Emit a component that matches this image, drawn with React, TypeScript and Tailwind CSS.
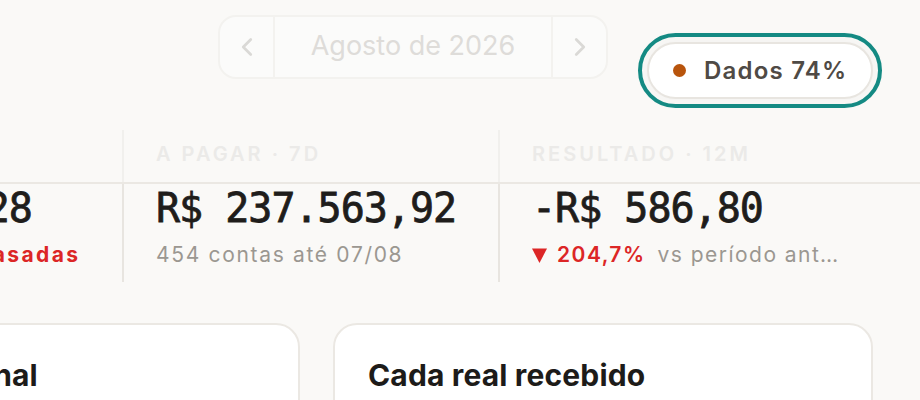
import { ChevronLeft, ChevronRight } from "lucide-react"

const columns = [
  {
    label: "Vencidas",
    value: "R$ 8.412,28",
    sub: <span className="font-bold text-[#dc2626] tracking-[0.115em]">11.023 contas atrasadas</span>,
  },
  {
    label: "A pagar · 7d",
    value: "R$ 237.563,92",
    sub: <span className="text-[#9b9791] tracking-[0.08em]">454 contas até 07/08</span>,
  },
  {
    label: "Resultado · 12m",
    value: "-R$ 586,80",
    sub: (
      <span className="flex items-center gap-[12px] overflow-hidden whitespace-nowrap">
        <span className="flex shrink-0 items-center gap-[10px] font-semibold text-[#dc2626] tracking-[0.07em]">
          <svg width="15" height="15" viewBox="0 0 15 15" aria-hidden>
            <path d="M0 0.5h15L7.5 15z" fill="#dc2626" />
          </svg>
          204,7%
        </span>
        <span className="truncate text-[#9b9791] tracking-[0.07em]">vs período anterior</span>
      </span>
    ),
  },
]

export default function App() {
  return (
    <div className="h-[400px] w-[920px] overflow-hidden bg-[#faf9f7] font-['Inter',sans-serif]">
      {/* Top bar: month picker + data badge */}
      <div className="flex items-start pl-[218px] pt-[15px]">
        <div className="flex h-[64px] w-[390px] items-stretch rounded-[18px] border-2 border-[#f3f2ef] bg-[#fbfbfa]">
          <button className="flex w-[55px] items-center justify-center border-r-2 border-[#f3f2ef] text-[#dad9d6]">
            <ChevronLeft size={30} strokeWidth={2.2} />
          </button>
          <div className="flex flex-1 items-center justify-center pb-[2px] text-[27px] text-[#dedcd9]">
            Agosto de 2026
          </div>
          <button className="flex w-[55px] items-center justify-center border-l-2 border-[#f3f2ef] text-[#dad9d6]">
            <ChevronRight size={30} strokeWidth={2.2} />
          </button>
        </div>

        <div className="ml-[39px] mt-[27px] flex h-[57px] w-[226px] items-center gap-[18px] rounded-full border-2 border-[#e8e5e0] bg-white pl-[24px] outline-4 outline-offset-[5px] outline-[#148a83] shadow-[0_0_18px_rgba(0,0,0,0.04)]">
          <span className="h-[13px] w-[13px] shrink-0 rounded-full bg-[#b8540c]" />
          <span className="text-[24px] font-semibold tracking-[0.05em] text-[#4f4a45]">Dados 74%</span>
        </div>
      </div>

      {/* Stats strip */}
      <div className="ml-[-254px] mt-[31px] w-[1200px]">
        <div className="flex h-[54px] border-b-2 border-[#ebe8e3]">
          {columns.map((c, i) => (
            <div
              key={i}
              className={`flex w-[376px] items-center pb-[4px] pl-[32px] ${i > 0 ? "border-l-2 border-[#f1f0ed]" : ""}`}
            >
              <span className="text-[20px] font-semibold uppercase tracking-[0.15em] text-[#ebeae8]">{c.label}</span>
            </div>
          ))}
        </div>
        <div className="flex h-[98px]">
          {columns.map((c, i) => (
            <div
              key={i}
              className={`flex w-[376px] flex-col pl-[32px] pr-[34px] ${i > 0 ? "border-l-2 border-[#e8e5e0]" : ""}`}
            >
              <div className="font-['DejaVu_Sans_Mono',monospace] text-[40px] leading-[48px] tracking-[-1px] text-[#1f1d1b] [-webkit-text-stroke:0.8px_#1f1d1b]">
                {c.value}
              </div>
              <div className="mt-[9px] text-[21px] leading-[28px]">{c.sub}</div>
            </div>
          ))}
        </div>
      </div>

      {/* Cards */}
      <div className="ml-[-240px] mt-[41px] flex gap-[33px]">
        {["Giro operacional", "Cada real recebido"].map((t) => (
          <div key={t} className="h-[200px] w-[540px] rounded-[24px] border-2 border-[#ebe8e3] bg-white px-[33px] pt-[32px]">
            <h2 className="text-[30px] font-bold leading-[36px] tracking-[0.005em] text-[#1d1b19]">{t}</h2>
          </div>
        ))}
      </div>
    </div>
  )
}
